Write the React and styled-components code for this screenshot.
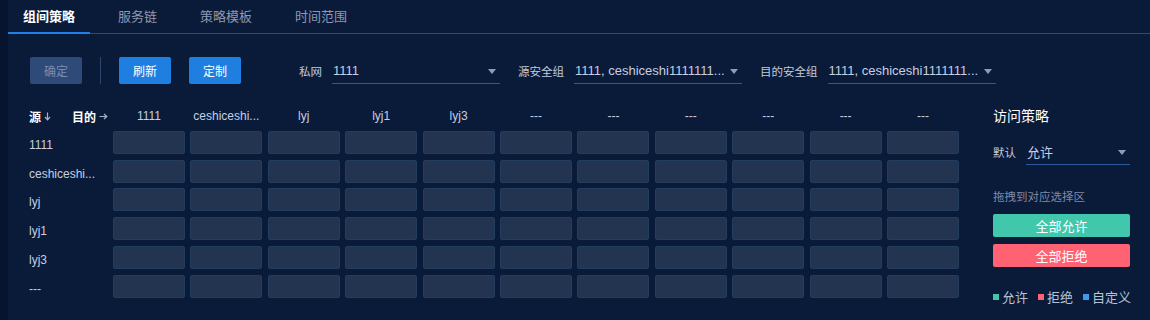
import React from 'react';
import styled, { createGlobalStyle } from 'styled-components';

const GlobalStyle = createGlobalStyle`
  html, body {
    margin: 0;
    padding: 0;
    background: #0a1a38;
    font-family: "Liberation Sans", "Noto Sans CJK SC", sans-serif;
  }
`;

const Page = styled.div`
  width: 1150px;
  height: 320px;
  box-sizing: border-box;
  border-left: 8px solid #061430;
  background: #0a1b3a;
  overflow: hidden;
`;

const Tabs = styled.div`
  display: flex;
  gap: 13px;
  height: 34px;
  border-bottom: 1px solid #284a82;
  box-sizing: border-box;
`;

const Tab = styled.div`
  padding: 0 15px;
  font-size: 13px;
  line-height: 33px;
  color: ${({ active }) => (active ? '#ffffff' : '#8d98b3')};
  font-weight: ${({ active }) => (active ? 700 : 400)};
  border-bottom: 2px solid ${({ active }) => (active ? '#1f80e6' : 'transparent')};
  margin-bottom: -1px;
`;

const Toolbar = styled.div`
  display: flex;
  align-items: center;
  height: 27px;
  margin: 23px 0 0 22px;
`;

const Button = styled.div`
  width: 52px;
  height: 27px;
  border-radius: 2px;
  display: flex;
  align-items: center;
  justify-content: center;
  font-size: 12px;
  color: ${({ disabled }) => (disabled ? '#7b8db0' : '#ffffff')};
  background: ${({ disabled }) => (disabled ? '#2e4a78' : '#1f7fe0')};
  margin-right: 18px;
`;

const Divider = styled.div`
  width: 1px;
  height: 27px;
  background: #2e4670;
  margin-right: 18px;
`;

const Field = styled.div`
  display: flex;
  align-items: center;
  margin-left: ${({ first }) => (first ? '40px' : '18px')};
`;

const Label = styled.span`
  font-size: 11.5px;
  color: #c3cadb;
  margin-right: 10px;
  white-space: nowrap;
`;

const Select = styled.div`
  position: relative;
  width: ${({ w }) => w || 168}px;
  height: 26px;
  box-sizing: border-box;
  border-bottom: 1px solid #2c589c;
  display: flex;
  align-items: center;
  padding: 0 18px 0 1px;
  font-size: 13px;
  color: #c6cee0;
  white-space: nowrap;
  overflow: hidden;
`;

const Caret = styled.span`
  position: absolute;
  right: 4px;
  top: 11px;
  width: 0;
  height: 0;
  border-left: 4.5px solid transparent;
  border-right: 4.5px solid transparent;
  border-top: 5px solid #8f9bb9;
`;

const Body = styled.div`
  display: flex;
  margin: 23px 0 0 21px;
`;

const Matrix = styled.div`
  display: grid;
  grid-template-columns: 78.5px repeat(11, 1fr);
  grid-template-rows: 18px repeat(6, 23px);
  column-gap: 5.5px;
  row-gap: 5.8px;
  width: 930px;
`;

const Corner = styled.div`
  display: flex;
  align-items: center;
  font-size: 12px;
  font-weight: 700;
  color: #ffffff;
  gap: 21px;
  white-space: nowrap;
`;

const CornerItem = styled.span`
  display: flex;
  align-items: center;
  gap: 3px;
`;

const ColHead = styled.div`
  font-size: 12px;
  color: #c6cee0;
  text-align: center;
  line-height: 18px;
  white-space: nowrap;
`;

const RowHead = styled.div`
  font-size: 12px;
  color: #c6cee0;
  line-height: 23px;
  padding-top: 3px;
  white-space: nowrap;
`;

const Cell = styled.div`
  background: #223450;
  border: 1px solid #233d5e;
  border-radius: 2px;
`;

const Side = styled.div`
  width: 137px;
  margin-left: 34px;
  display: flex;
  flex-direction: column;
`;

const SideTitle = styled.div`
  font-size: 14px;
  color: #ffffff;
  line-height: 18px;
`;

const DefaultRow = styled.div`
  display: flex;
  align-items: center;
  margin-top: 14px;
`;

const Hint = styled.div`
  font-size: 11.5px;
  color: #7f8aa6;
  margin-top: 24px;
  line-height: 16px;
`;

const Action = styled.div`
  height: 23px;
  border-radius: 2px;
  margin-top: ${({ mt }) => mt}px;
  background: ${({ color }) => color};
  color: #ffffff;
  font-size: 13px;
  display: flex;
  align-items: center;
  justify-content: center;
`;

const Legend = styled.div`
  display: flex;
  align-items: center;
  margin-top: 20px;
  gap: 10px;
  white-space: nowrap;
`;

const LegendItem = styled.div`
  display: flex;
  align-items: center;
  flex-shrink: 0;
  font-size: 13px;
  color: #b8c2d6;

  &::before {
    content: '';
    width: 6px;
    height: 6px;
    margin-right: 3px;
    background: ${({ color }) => color};
  }
`;

const DownArrow = () => (
  <svg width="7" height="9" viewBox="0 0 7 9">
    <path d="M3.5 0.5V7.5M1 5L3.5 7.8L6 5" stroke="#a9b3c8" strokeWidth="1.2" fill="none" />
  </svg>
);

const RightArrow = () => (
  <svg width="9" height="7" viewBox="0 0 9 7">
    <path d="M0.5 3.5H7.5M5 1L7.8 3.5L5 6" stroke="#a9b3c8" strokeWidth="1.2" fill="none" />
  </svg>
);

const columns = ['1111', 'ceshiceshi...', 'lyj', 'lyj1', 'lyj3', '---', '---', '---', '---', '---', '---'];
const rows = ['1111', 'ceshiceshi...', 'lyj', 'lyj1', 'lyj3', '---'];

export default function App() {
  return (
    <Page>
      <GlobalStyle />
      <Tabs>
        <Tab active>组间策略</Tab>
        <Tab>服务链</Tab>
        <Tab>策略模板</Tab>
        <Tab>时间范围</Tab>
      </Tabs>

      <Toolbar>
        <Button disabled>确定</Button>
        <Divider />
        <Button>刷新</Button>
        <Button>定制</Button>
        <Field first>
          <Label>私网</Label>
          <Select>
            1111
            <Caret />
          </Select>
        </Field>
        <Field>
          <Label>源安全组</Label>
          <Select>
            1111, ceshiceshi1111111...
            <Caret />
          </Select>
        </Field>
        <Field>
          <Label>目的安全组</Label>
          <Select>
            1111, ceshiceshi1111111...
            <Caret />
          </Select>
        </Field>
      </Toolbar>

      <Body>
        <Matrix>
          <Corner>
            <CornerItem>源<DownArrow /></CornerItem>
            <CornerItem>目的<RightArrow /></CornerItem>
          </Corner>
          {columns.map((c, i) => (
            <ColHead key={'c' + i}>{c}</ColHead>
          ))}
          {rows.map((r, ri) => (
            <React.Fragment key={'r' + ri}>
              <RowHead>{r}</RowHead>
              {columns.map((_, ci) => (
                <Cell key={ri + '-' + ci} />
              ))}
            </React.Fragment>
          ))}
        </Matrix>

        <Side>
          <SideTitle>访问策略</SideTitle>
          <DefaultRow>
            <Label>默认</Label>
            <Select w={104}>
              允许
              <Caret />
            </Select>
          </DefaultRow>
          <Hint>拖拽到对应选择区</Hint>
          <Action mt={9} color="#41c8ac">全部允许</Action>
          <Action mt={7} color="#ff6373">全部拒绝</Action>
          <Legend>
            <LegendItem color="#41c8ac">允许</LegendItem>
            <LegendItem color="#ff6373">拒绝</LegendItem>
            <LegendItem color="#3f97f2">自定义</LegendItem>
          </Legend>
        </Side>
      </Body>
    </Page>
  );
}
